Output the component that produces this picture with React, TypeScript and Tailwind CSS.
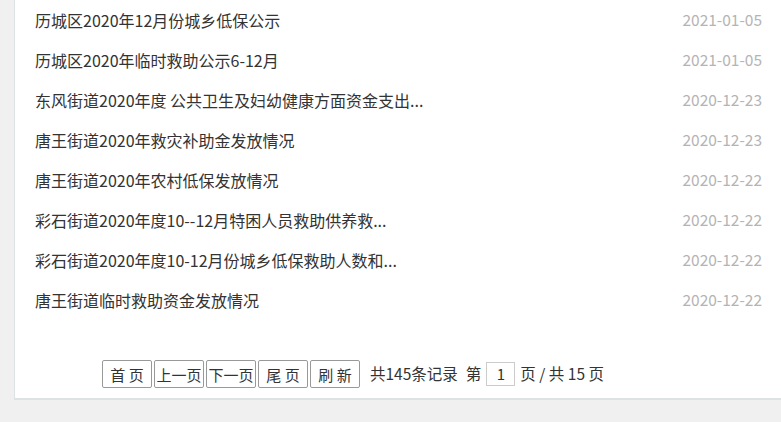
import React from "react";

const rows = [
    {title: "历城区2020年12月份城乡低保公示", date: "2021-01-05"},
    {title: "历城区2020年临时救助公示6-12月", date: "2021-01-05"},
    {title: "东风街道2020年度 公共卫生及妇幼健康方面资金支出...", date: "2020-12-23"},
    {title: "唐王街道2020年救灾补助金发放情况", date: "2020-12-23"},
    {title: "唐王街道2020年农村低保发放情况", date: "2020-12-22"},
    {title: "彩石街道2020年度10--12月特困人员救助供养救...", date: "2020-12-22"},
    {title: "彩石街道2020年度10-12月份城乡低保救助人数和...", date: "2020-12-22"},
    {title: "唐王街道临时救助资金发放情况", date: "2020-12-22"},
];

const buttons = ["首 页", "上一页", "下一页", "尾 页", "刷 新"];

export default function App() {
    return (
        <div className="w-[781px] h-[422px] bg-[#f0f0f0] overflow-hidden font-['Noto_Sans_CJK_SC','Noto_Sans',sans-serif]">
            <div className="ml-[14px] w-[767px] h-[400px] bg-white border-l border-b-2 border-[#dde2e5]">
                <ul className="pl-[20px] pr-[19px]">
                    {rows.map((r) => (
                        <li key={r.title + r.date} className="h-[40px] flex items-center justify-between">
                            <span className="text-[16px] text-[#333]">{r.title}</span>
                            <span className="text-[15.5px] text-[#b4b4b4]">{r.date}</span>
                        </li>
                    ))}
                </ul>
                <div className="mt-[40px] pl-[87px] flex items-center text-[15.5px] text-[#333]">
                    <div className="flex gap-[2px]">
                        {buttons.map((b) => (
                            <button key={b}
                                    className="w-[50px] h-[28px] border border-[#999] rounded-[2px] bg-white text-[15px] text-[#333] leading-none whitespace-pre">
                                {b}
                            </button>
                        ))}
                    </div>
                    <span className="ml-[10px]">共145条记录</span>
                    <span className="ml-[8px]">第</span>
                    <div className="ml-[5px] w-[29px] h-[24px] border border-[#ccc] flex items-center justify-center text-[15px] text-[#333]">1</div>
                    <span className="ml-[5px] whitespace-pre">页 / 共 15 页</span>
                </div>
            </div>
        </div>
    );
}
